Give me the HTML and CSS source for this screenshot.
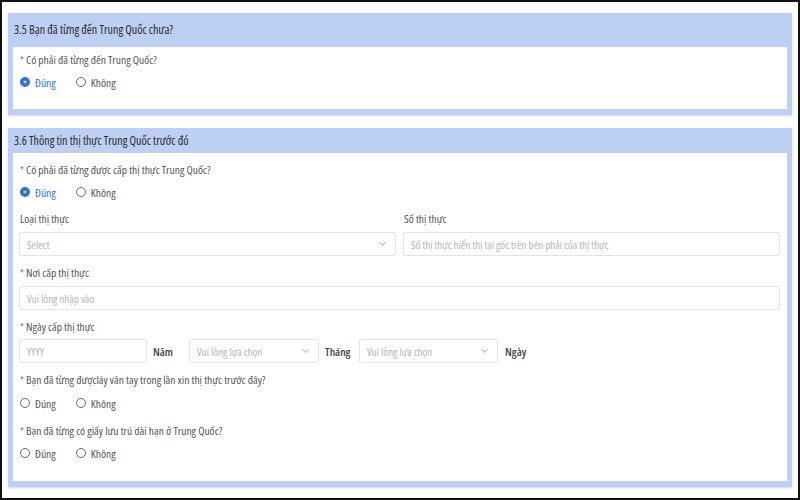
FILE: index.html
```html
<!DOCTYPE html>
<html lang="vi">
<head>
<meta charset="utf-8">
<link rel="stylesheet" href="styles.css">
</head>
<body>
<div class="page">
  <section class="card card-1">
    <div class="card-head">3.5 Bạn đã từng đến Trung Quốc chưa?</div>
    <div class="card-body">
      <div class="label"><span class="req">*</span> Có phải đã từng đến Trung Quốc?</div>
      <div class="radios">
        <span class="radio checked"><span class="dot"></span>Đúng</span>
        <span class="radio"><span class="dot"></span>Không</span>
      </div>
    </div>
  </section>

  <section class="card card-2">
    <div class="card-head">3.6 Thông tin thị thực Trung Quốc trước đó</div>
    <div class="card-body">
      <div class="label"><span class="req">*</span> Có phải đã từng được cấp thị thực Trung Quốc?</div>
      <div class="radios">
        <span class="radio checked"><span class="dot"></span>Đúng</span>
        <span class="radio"><span class="dot"></span>Không</span>
      </div>

      <div class="two-col gap-top">
        <div class="field">
          <div class="label plain">Loại thị thực</div>
          <div class="input select"><span class="ph">Select</span><span class="chev"></span></div>
        </div>
        <div class="field">
          <div class="label plain">Số thị thực</div>
          <div class="input"><span class="ph">Số thị thực hiển thị tại gốc trên bên phải của thị thực</span></div>
        </div>
      </div>

      <div class="field gap-mid">
        <div class="label"><span class="req">*</span> Nơi cấp thị thực</div>
        <div class="input"><span class="ph">Vui lòng nhập vào</span></div>
      </div>

      <div class="field gap-mid">
        <div class="label"><span class="req">*</span> Ngày cấp thị thực</div>
        <div class="date-row">
          <div class="input year"><span class="ph">YYYY</span></div>
          <span class="unit unit-year">Năm</span>
          <div class="input select month"><span class="ph">Vui lòng lựa chọn</span><span class="chev"></span></div>
          <span class="unit unit-month">Tháng</span>
          <div class="input select day"><span class="ph">Vui lòng lựa chọn</span><span class="chev"></span></div>
          <span class="unit unit-day">Ngày</span>
        </div>
      </div>

      <div class="label gap-q3"><span class="req">*</span> Bạn đã từng đượcláy vân tay trong lần xin thị thực trước đây?</div>
      <div class="radios r-wide">
        <span class="radio"><span class="dot"></span>Đúng</span>
        <span class="radio"><span class="dot"></span>Không</span>
      </div>

      <div class="label gap-q4"><span class="req">*</span> Bạn đã từng có giấy lưu trú dài hạn ở Trung Quốc?</div>
      <div class="radios">
        <span class="radio"><span class="dot"></span>Đúng</span>
        <span class="radio"><span class="dot"></span>Không</span>
      </div>
    </div>
  </section>
</div>
</body>
</html>
```

FILE: styles.css
```css
* { box-sizing: border-box; }

html, body {
  margin: 0;
  padding: 0;
  background: #fff;
}

body {
  font-family: "Open Sans", "Lato", sans-serif;
  font-stretch: 77%;
  color: #555;
}

.page {
  width: 800px;
  height: 500px;
  border: 2px solid #111;
  padding: 11px 6px 0 6px;
  overflow: hidden;
}

.card {
  background: #bdd0f4;
  padding: 0 5px 6px 5px;
  box-shadow: 0 1px 2px rgba(120, 140, 180, 0.35);
}

.card-1 { margin-bottom: 13px; }

.card-head {
  height: 34px;
  line-height: 34px;
  padding-left: 1px;
  font-size: 12px;
  color: #2b2b2b;
}

.card-2 .card-head {
  height: 25px;
  line-height: 25px;
}

.card-body {
  background: #fff;
  padding: 5px 7px 19px 6px;
}

.card-2 .card-body {
  padding-top: 9px;
  padding-bottom: 20px;
}

.label {
  height: 16px;
  line-height: 16px;
  font-size: 11.5px;
  color: #555;
  padding-left: 1px;
  white-space: nowrap;
}

.req {
  color: #e5484d;
  font-size: 10px;
}

.radios {
  display: flex;
  gap: 19px;
  margin-top: 6px;
  height: 16px;
  align-items: center;
  font-size: 11.5px;
  color: #555;
}

.radio {
  display: inline-flex;
  align-items: center;
  gap: 5px;
}

.radio .dot {
  width: 10px;
  height: 10px;
  border-radius: 50%;
  border: 1px solid #6a6a6a;
  background: #fff;
  margin-left: 1px;
}

.radio.checked {
  color: #2f74c8;
}

.radio.checked .dot {
  border: 3px solid #2f74c8;
  background: #fff;
  box-shadow: inset 0 0 0 1px #2f74c8;
}

.two-col {
  display: grid;
  grid-template-columns: 1fr 1fr;
  gap: 7px;
}

.gap-top { margin-top: 11px; }
.gap-mid { margin-top: 9px; }
.gap-q3 { margin-top: 9px; }
.gap-q4 { margin-top: 12px; }
.r-wide { margin-top: 7px; }

.field .label { margin-bottom: 5px; }
.field .date-row { margin-top: -1px; }

.input {
  height: 24px;
  border: 1px solid #e2e4e8;
  border-radius: 2px;
  background: #fff;
  display: flex;
  align-items: center;
  padding: 0 7px;
  font-size: 11px;
}

.ph {
  color: #b5b5b5;
  white-space: nowrap;
}

.select {
  justify-content: space-between;
}

.chev {
  width: 5px;
  height: 5px;
  border-right: 1px solid #bbb;
  border-bottom: 1px solid #bbb;
  transform: rotate(45deg);
  margin: -3px 3px 0 0;
}

.date-row {
  display: flex;
  align-items: center;
}

.year { width: 128px; }
.month { width: 130px; }
.day { width: 139px; }

.unit {
  font-size: 11.5px;
  font-weight: 600;
  color: #444;
  padding-left: 6px;
}

.unit-year { width: 42px; }
.unit-month { width: 40px; }
.unit-day { padding-left: 7px; }
```
